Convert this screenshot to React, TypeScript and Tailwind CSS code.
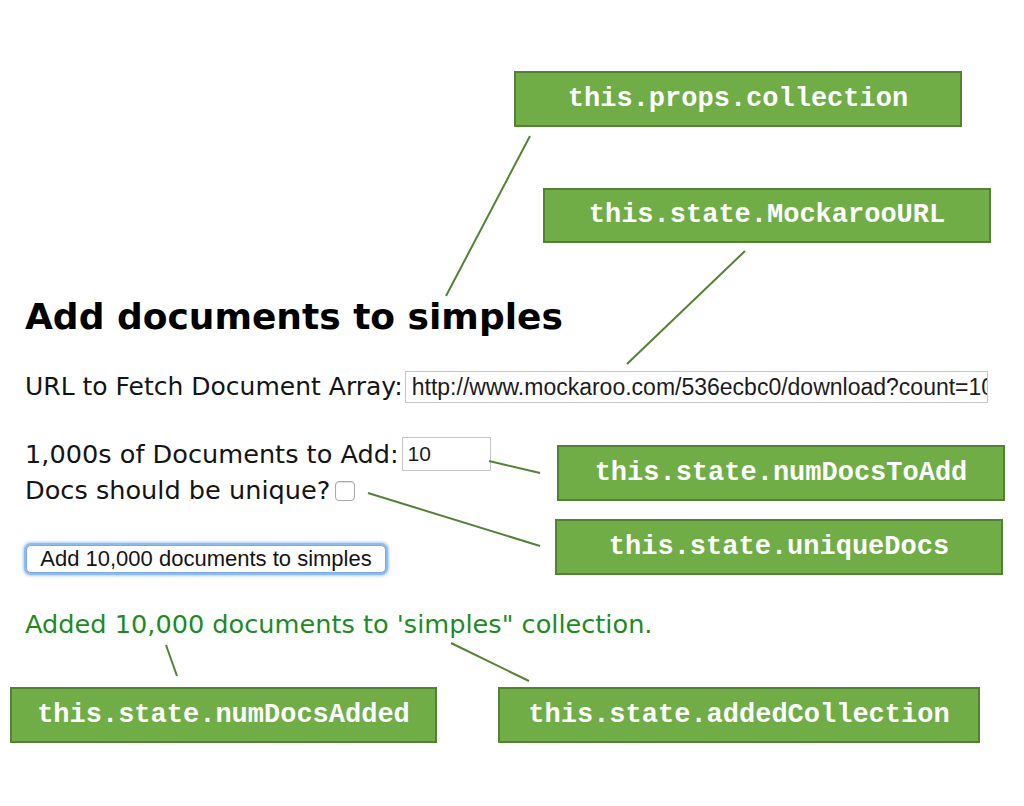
import React from "react";

type Note = { text: string; cls: string };

const notes: Note[] = [
  { text: "this.props.collection", cls: "left-[514px] top-[71px] w-[448px] h-[56px]" },
  { text: "this.state.MockarooURL", cls: "left-[543px] top-[188px] w-[448px] h-[55px]" },
  { text: "this.state.numDocsToAdd", cls: "left-[557px] top-[445px] w-[448px] h-[56px]" },
  { text: "this.state.uniqueDocs", cls: "left-[555px] top-[519px] w-[448px] h-[56px]" },
  { text: "this.state.numDocsAdded", cls: "left-[10px] top-[687px] w-[427px] h-[56px]" },
  { text: "this.state.addedCollection", cls: "left-[498px] top-[687px] w-[482px] h-[56px]" },
];

const lines: [number, number, number, number][] = [
  [530, 136, 446, 296],
  [745, 251, 627, 364],
  [489, 461, 540, 473],
  [368, 493, 540, 546],
  [166, 645, 177, 676],
  [451, 643, 529, 681],
];

const sans = "font-['DejaVu_Sans','Liberation_Sans',sans-serif]";

export default function App() {
  return (
    <div className="relative w-[1024px] h-[806px] bg-white overflow-hidden">
      <div className="pt-[296px] pl-[25px] text-[#141414]">
        <h1 className={`${sans} text-[36px] leading-[42px] font-bold text-black`}>
          Add documents to simples
        </h1>

        <div className="mt-[33px] flex items-center">
          <span className={`${sans} text-[25px] leading-[30px]`}>URL to Fetch Document Array:</span>
          <div className="ml-[2px] w-[583px] h-[32px] border border-[#c6c6c6] bg-white overflow-hidden flex items-center pl-[6px]">
            <span className="font-['Liberation_Sans',Arial,sans-serif] text-[23px] leading-[30px] whitespace-nowrap text-[#1c1c1c]">
              http://www.mockaroo.com/536ecbc0/download?count=1000
            </span>
          </div>
        </div>

        <div className="mt-[34px] flex items-center">
          <span className={`${sans} text-[25.6px] leading-[30px]`}>1,000s of Documents to Add:</span>
          <div className="ml-[3px] w-[89px] h-[34px] border border-[#c6c6c6] bg-white flex items-center pl-[5px]">
            <span className="font-['Liberation_Sans',Arial,sans-serif] text-[21px] leading-[30px] text-[#1c1c1c]">10</span>
          </div>
        </div>

        <div className="mt-[4px] flex items-center">
          <span className={`${sans} text-[25.6px] leading-[30px]`}>Docs should be unique?</span>
          <span className="ml-[5px] mt-[2px] w-[20px] h-[20px] rounded-[4px] border border-[#a8a8a8] bg-white shadow-[inset_0_1px_1px_rgba(0,0,0,0.12)]" />
        </div>

        <button
          type="button"
          className="mt-[40px] ml-[1px] w-[360px] h-[28px] rounded-[5px] border border-[#7aa8e0] bg-white shadow-[0_0_0_2px_#8fbcef,0_0_3px_3px_rgba(120,170,235,0.6)] flex items-center justify-center font-['Liberation_Sans',Arial,sans-serif] text-[22px] leading-[26px] text-[#151515]"
        >
          Add 10,000 documents to simples
        </button>

        <p className={`${sans} mt-[36px] text-[25.6px] leading-[30px] text-[#1f8a24]`}>
          Added 10,000 documents to 'simples" collection.
        </p>
      </div>

      <svg className="absolute inset-0 pointer-events-none" width="1024" height="806" viewBox="0 0 1024 806">
        {lines.map(([x1, y1, x2, y2], i) => (
          <line key={i} x1={x1} y1={y1} x2={x2} y2={y2} stroke="#548235" strokeWidth="2" />
        ))}
      </svg>

      {notes.map((n) => (
        <div
          key={n.text}
          className={`absolute ${n.cls} bg-[#70ad47] border-2 border-[#548235] flex items-center justify-center`}
        >
          <span className="font-['Liberation_Mono','Courier_New',monospace] font-bold text-[27px] leading-none text-white whitespace-nowrap">
            {n.text}
          </span>
        </div>
      ))}
    </div>
  );
}
